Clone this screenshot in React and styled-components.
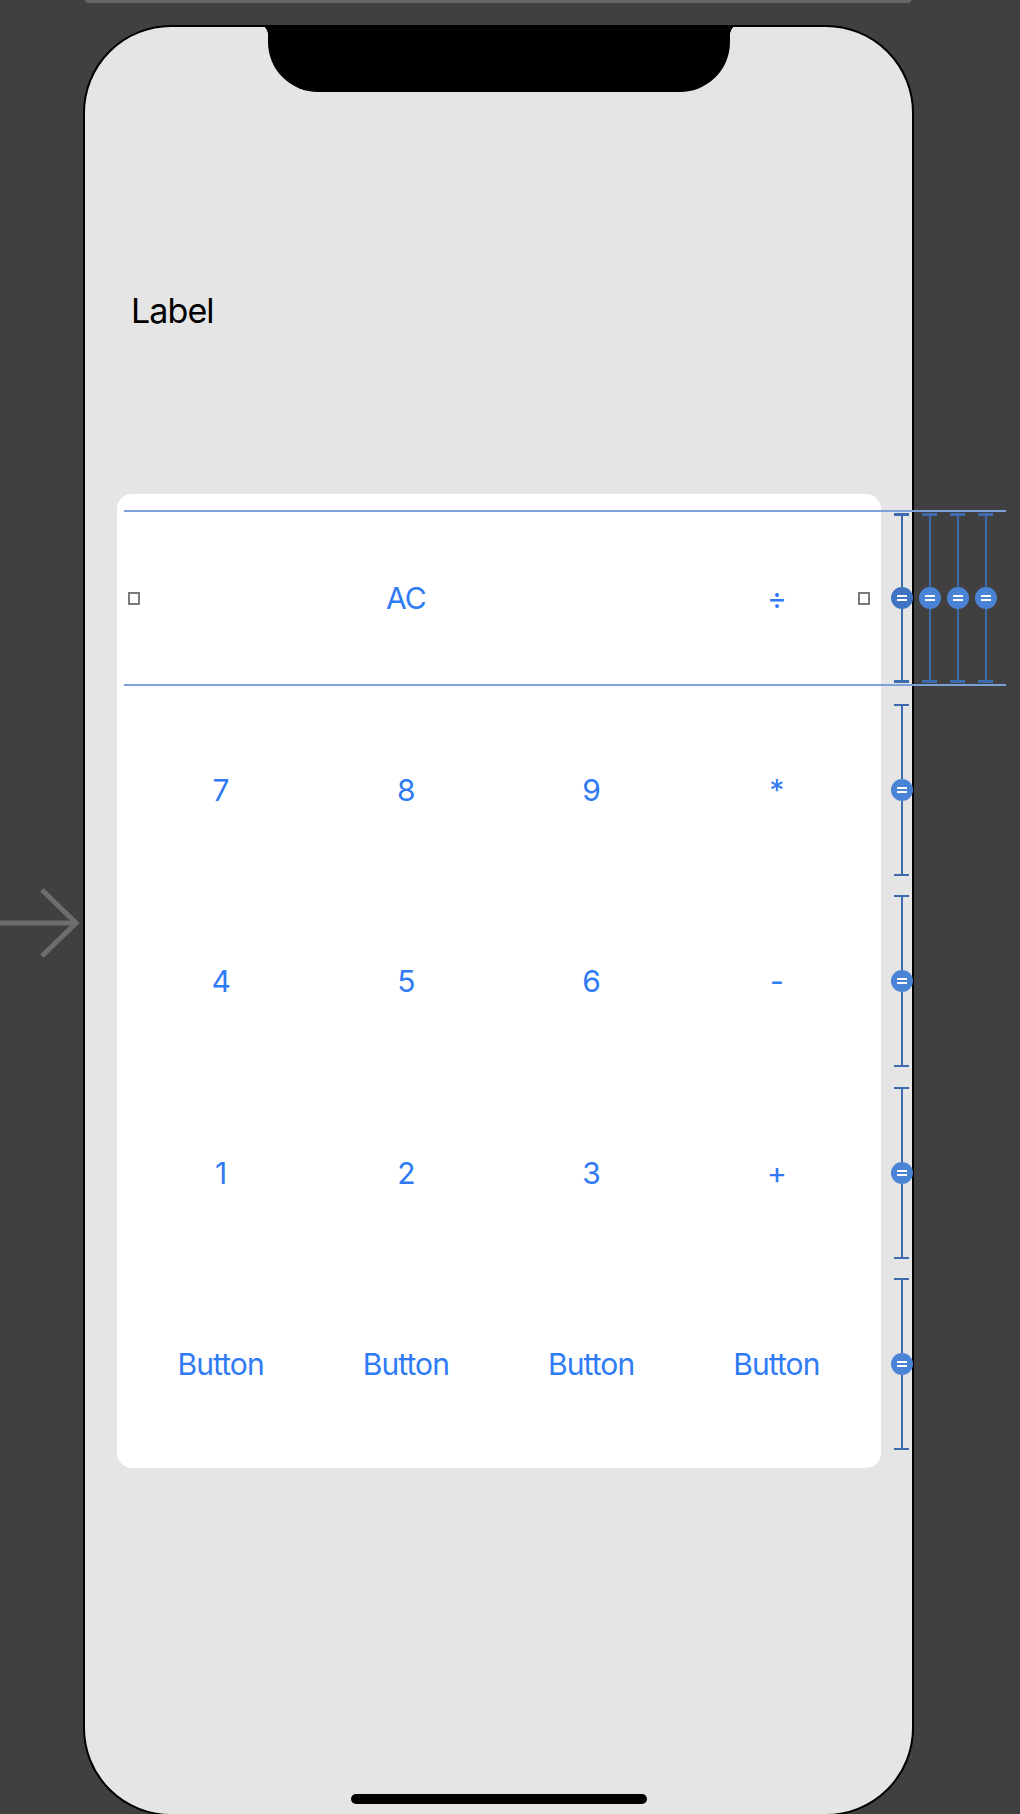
import React from "react";
import styled, { createGlobalStyle } from "styled-components";

const GlobalStyle = createGlobalStyle`
  html, body {
    margin: 0;
    padding: 0;
  }
  body {
    background: #404040;
    overflow: hidden;
    font-family: Inter, "Liberation Sans", sans-serif;
  }
`;

// Canvas around the scene
const Canvas = styled.div`
  width: 1020px;
  height: 1814px;
  overflow: hidden;
  background: #404040;
  display: flex;
  flex-direction: column;
`;

const SceneEdge = styled.div`
  flex: none;
  width: 826px;
  height: 3px;
  margin-left: 85px;
  background: #676767;
  border-radius: 0 0 4px 4px;
`;

const Stage = styled.div`
  flex: none;
  display: flex;
  align-items: flex-start;
  margin-top: 22px;
`;

const EntryArrow = styled.svg`
  flex: none;
  width: 83px;
  height: 74px;
  margin-top: 861px;
`;

// Device frame
const Phone = styled.div`
  position: relative;
  flex: none;
  box-sizing: border-box;
  width: 831px;
  height: 1791px;
  border: 2px solid #000;
  border-radius: 88px;
  background: #e5e5e5;
  display: flex;
  flex-direction: column;
  align-items: center;
`;

const Notch = styled.div`
  position: relative;
  flex: none;
  width: 462px;
  height: 67px;
  margin-top: -2px;
  background: #000;
  border-radius: 0 0 50px 50px;

  &::before,
  &::after {
    content: "";
    position: absolute;
    top: 0;
    width: 9px;
    height: 9px;
  }
  &::before {
    left: -9px;
    background: radial-gradient(circle at 0 100%, transparent 8.5px, #000 9px);
  }
  &::after {
    right: -9px;
    background: radial-gradient(circle at 100% 100%, transparent 8.5px, #000 9px);
  }
`;

const TitleLabel = styled.div`
  align-self: flex-start;
  margin: 199px 0 0 46px;
  font-size: 34px;
  line-height: 40px;
  letter-spacing: -0.9px;
  color: #000;
`;

const HomeIndicator = styled.div`
  flex: none;
  width: 296px;
  height: 10px;
  margin-top: auto;
  margin-bottom: 10px;
  background: #000;
  border-radius: 5px;
`;

// Keypad
const Keypad = styled.div`
  flex: none;
  box-sizing: border-box;
  width: 764px;
  margin-top: 163px;
  padding: 17px;
  background: #fff;
  border-radius: 15px;
  display: flex;
  flex-direction: column;
  gap: 17.5px;
`;

const KeyRow = styled.div`
  position: relative;
  height: 174px;
  display: grid;
  grid-template-columns: repeat(4, 1fr);
  column-gap: 11px;
`;

const Key = styled.button`
  display: flex;
  align-items: center;
  justify-content: center;
  padding: 0;
  border: 0;
  background: transparent;
  font-family: Inter, "Liberation Sans", sans-serif;
  font-size: 30px;
  letter-spacing: -0.9px;
  color: #2f7bf5;
  cursor: pointer;
`;

// Interface builder annotations (overlays)
const GuideLine = styled.div`
  position: absolute;
  left: -10px;
  right: -142px;
  ${(p) => (p.$edge === "top" ? "top: -1px;" : "bottom: -1px;")}
  height: 2px;
  background: #7ba1d8;
`;

const Handle = styled.div`
  position: absolute;
  top: 50%;
  ${(p) => (p.$side === "left" ? "left: 0;" : "left: 100%;")}
  box-sizing: border-box;
  width: 12px;
  height: 13px;
  margin: -6px 0 0 -6px;
  border: 2px solid #7a7a7a;
  background: #fff;
`;

const ConstraintBar = styled.div`
  position: absolute;
  top: ${(p) => p.$inset}px;
  bottom: ${(p) => p.$inset}px;
  left: calc(100% + ${(p) => p.$offset - 7.5}px);
  width: 15px;
  display: flex;
  flex-direction: column;
  align-items: center;
`;

const BarCap = styled.div`
  flex: none;
  width: 15px;
  height: ${(p) => (p.$thick ? 3 : 2)}px;
  background: #3d6cae;
`;

const BarLine = styled.div`
  flex: 1;
  width: 2px;
  background: #3d6cae;
`;

const EqualBadge = styled.div`
  flex: none;
  width: 22px;
  height: 22px;
  border-radius: 50%;
  background: ${(p) => (p.$dark ? "#3f74c2" : "#4a83d6")};
  display: flex;
  align-items: center;
  justify-content: center;
`;

const EqualSign = styled.div`
  box-sizing: border-box;
  width: 10px;
  height: 6px;
  border-top: 2px solid #fff;
  border-bottom: 2px solid #fff;
`;

function Constraint({ offset, inset = 1, thick, dark }) {
  return (
    <ConstraintBar $offset={offset} $inset={inset}>
      <BarCap $thick={thick} />
      <BarLine />
      <EqualBadge $dark={dark}>
        <EqualSign />
      </EqualBadge>
      <BarLine />
      <BarCap $thick={thick} />
    </ConstraintBar>
  );
}

const rows = [
  ["", "AC", "", "÷"],
  ["7", "8", "9", "*"],
  ["4", "5", "6", "-"],
  ["1", "2", "3", "+"],
  ["Button", "Button", "Button", "Button"],
];

export default function App() {
  return (
    <>
      <GlobalStyle />
      <Canvas>
        <SceneEdge />
        <Stage>
          <EntryArrow viewBox="0 0 83 74">
            <g fill="none" stroke="#6d6d6d" strokeWidth="5">
              <line x1="0" y1="37" x2="76" y2="37" />
              <polyline points="42,4 76,37 42,70" />
            </g>
          </EntryArrow>
          <Phone>
            <Notch />
            <TitleLabel>Label</TitleLabel>
            <Keypad>
              {rows.map((keys, i) => (
                <KeyRow key={i}>
                  {keys.map((k, j) => (
                    <Key key={j}>{k}</Key>
                  ))}
                  {i === 0 ? (
                    <>
                      <GuideLine $edge="top" />
                      <GuideLine $edge="bottom" />
                      <Handle $side="left" />
                      <Handle $side="right" />
                      {[38, 66, 94, 122].map((o, n) => (
                        <Constraint key={o} offset={o} inset={2} thick dark={n === 0} />
                      ))}
                    </>
                  ) : (
                    <Constraint offset={38} />
                  )}
                </KeyRow>
              ))}
            </Keypad>
            <HomeIndicator />
          </Phone>
        </Stage>
      </Canvas>
    </>
  );
}
